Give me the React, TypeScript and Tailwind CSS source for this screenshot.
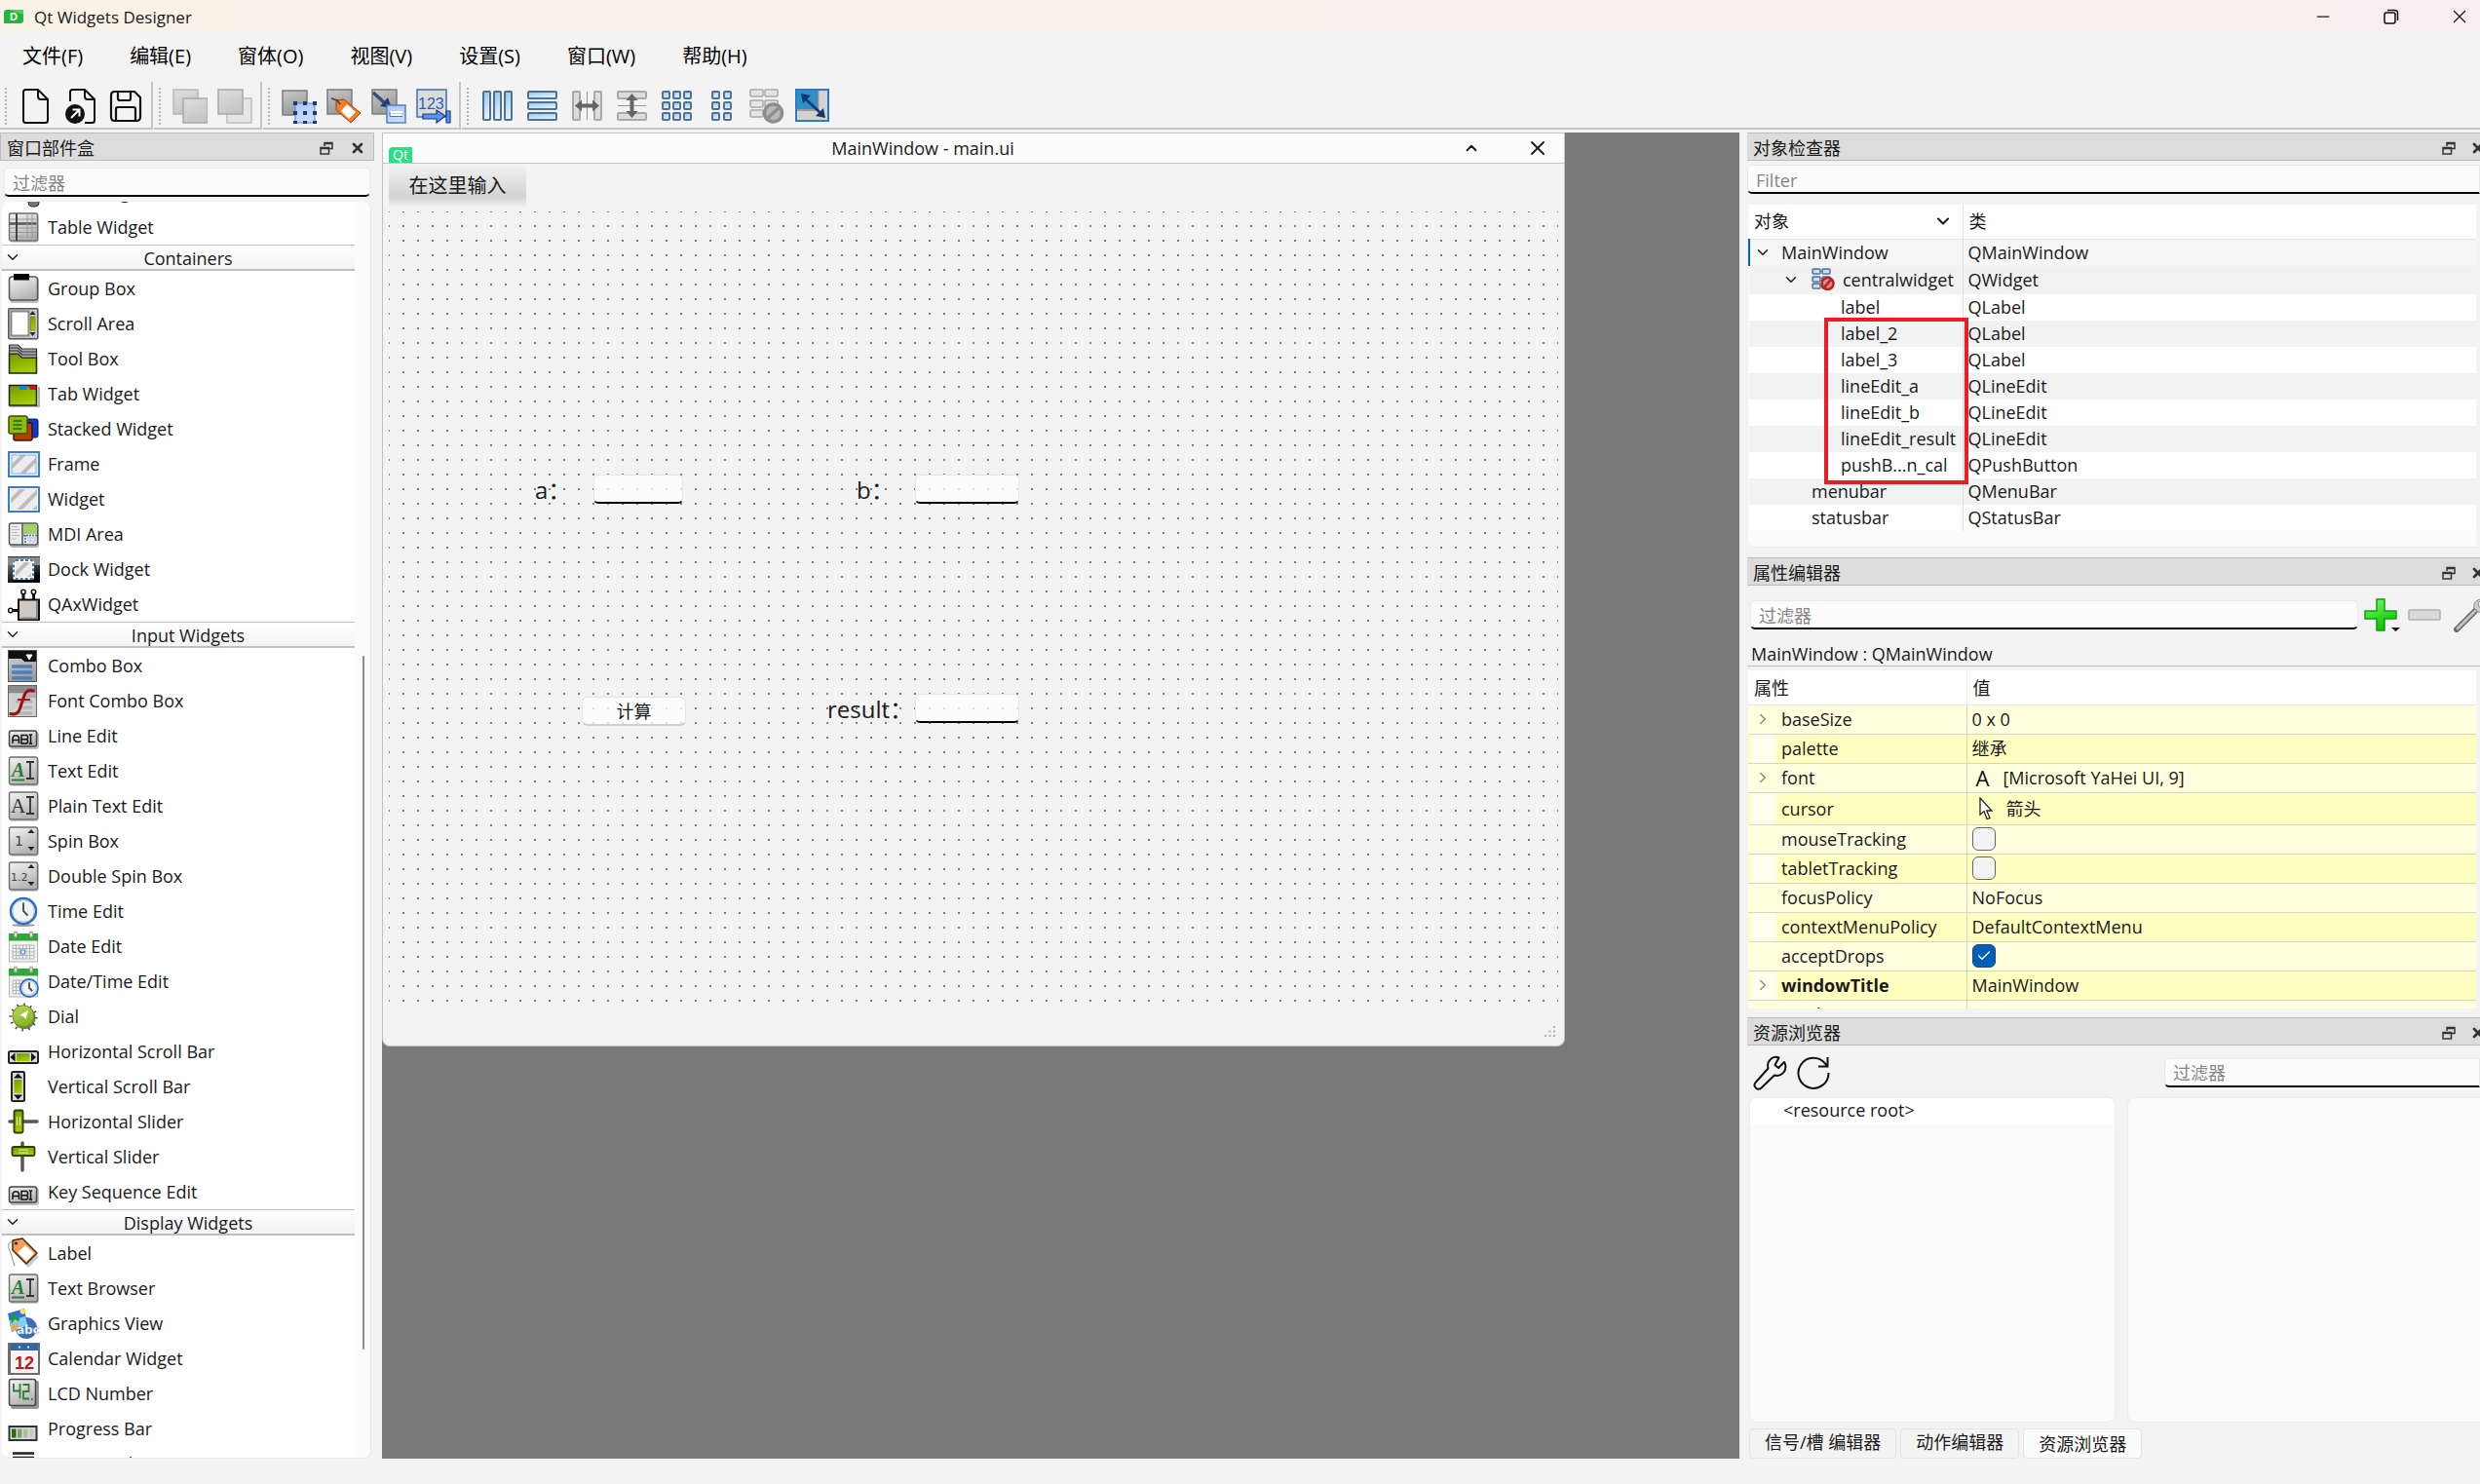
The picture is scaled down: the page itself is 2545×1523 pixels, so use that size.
import type { ReactNode } from 'react';
import { Check, ChevronDown, ChevronRight, ChevronUp, Minus, X } from 'lucide-react';

const FONT = "font-['Open_Sans','Noto_Sans_CJK_SC',sans-serif]";

/* ---------- shared gradients ---------- */

function Gradients() {
  const stops: [string, string, string][] = [
    ['gGray', '#f4f4f4', '#b4b4b4'],
    ['gDark', '#c9c9c9', '#9a9a9a'],
    ['gPale', '#dedede', '#c6c6c6'],
    ['gGreen', '#6f9a00', '#a5cc00'],
    ['gLeaf', '#b6dc5a', '#86b51f'],
    ['gBlue', '#8cc4f2', '#e2f2ff'],
    ['gSoft', '#a9c8ff', '#c9dcff'],
    ['gBlack', '#9a9a9a', '#000000'],
    ['gPlus', '#7dff6a', '#08c400'],
  ];
  return (
    <svg className="absolute size-0" aria-hidden="true">
      <defs>
        {stops.map(([id, a, b]) => (
          <linearGradient key={id} id={id} x1="0" y1="0" x2="0.4" y2="1">
            <stop offset="0" stopColor={a} />
            <stop offset="1" stopColor={b} />
          </linearGradient>
        ))}
      </defs>
    </svg>
  );
}

/* ---------- toolbox icons, drawn on a 33 x 33 grid ---------- */

const Plate = ({ h = 29, y = 2 }: { h?: number; y?: number }) => (
  <>
    <rect x="2" y={y + 1} width="30" height={h} rx="3" fill="#000" opacity=".18" />
    <rect x="1.5" y={y} width="29" height={h - 1} rx="2" fill="url(#gGray)" stroke="#6e6e6e" strokeWidth="1.4" />
  </>
);

const Stripes = ({ x, y, w, h }: { x: number; y: number; w: number; h: number }) => (
  <svg x={x} y={y} width={w} height={h} viewBox={`0 0 ${w} ${h}`}>
    <rect width={w} height={h} fill="#ededed" />
    <path d="M-6 18 16-4M4 26 32-2M16 30 40 6" stroke="#bdbdbb" strokeWidth="4" />
  </svg>
);

const AbIcon = (
  <>
    <rect x="2" y="12" width="30" height="18" rx="3" fill="#000" opacity=".25" />
    <rect x="1.5" y="11" width="28" height="16" rx="2" fill="url(#gGray)" stroke="#444" strokeWidth="1.5" />
    <path d="M5 24v-6l1.500-2h3.500l1.500 2v6M5 20.500h6.500M14 15.500v8.500h5.500l1-1v-2l-1-1.200 1-1.200v-2l-1-1.100zM14 19.800h5.500M22 14.500l1.500 1.200 1.500-1.200M22 24.700l1.500-1.200 1.500 1.200M23.500 15.700v8" fill="none" stroke="#111" strokeWidth="1.500" />
  </>
);

const Tick = ({ up = 8, down = 24 }: { up?: number; down?: number }) => (
  <path d={`M20.500 ${up}l3.500-4 3.500 4zM20.500 ${down - 2}l3.500 4 3.500-4z`} fill="#222" />
);

const CalendarBase = (
  <>
    <rect x="1.500" y="4" width="29" height="28" fill="#f2f2f2" stroke="#b5b5b5" />
    <rect x="1" y="3" width="30" height="7.500" fill="#2fa836" />
    <path d="M5 15h22M5 18.500h22M5 22h22M5 25.500h22M5 29h22M5 15v14M8.500 15v14M12 15v14M15.500 15v14M19 15v14M22.500 15v14M27 15v14" stroke="#b4b4b4" strokeWidth="1" />
    <path d="M8 5.500V2.500M24 5.500V2.500" stroke="#9d9d9d" strokeWidth="4" strokeLinecap="round" />
    <path d="M8 5.500V2.500M24 5.500V2.500" stroke="#eee" strokeWidth="1.500" strokeLinecap="round" />
  </>
);

const Clock = ({ cx, cy, r }: { cx: number; cy: number; r: number }) => (
  <>
    <circle cx={cx} cy={cy} r={r} fill="#f1f4f2" stroke="#2f6fc0" strokeWidth={r / 5} />
    <circle cx={cx} cy={cy} r={r - 1.8} fill="none" stroke="#a9c6e6" strokeWidth="1" />
    <path d={`M${cx} ${cy - r * 0.65}V${cy}l${r * 0.35} ${r * 0.35}`} fill="none" stroke="#444" strokeWidth="1.800" />
  </>
);

const TextEditIcon = (
  <>
    <Plate />
    <text x="4" y="22" fontFamily="Liberation Serif" fontStyle="italic" fontWeight="700" fontSize="20" fill="#2a7a32">A</text>
    <path d="M4 25.500h13" stroke="#2a7a32" strokeWidth="1.800" />
    <path d="M19 7h8M19 24h8M23 7v17" stroke="#333" strokeWidth="1.800" />
  </>
);

const icons: Record<string, ReactNode> = {
  tree: (
    <>
      <rect x="21" y="20" width="11" height="11" rx="4" fill="#777" stroke="#333" />
      <path d="M5 5h10v7H5zM9 12v13h12" fill="none" stroke="#555" strokeWidth="2" />
    </>
  ),
  table: (
    <>
      <Plate />
      <path d="M1.500 12.500h28" stroke="#555" strokeWidth="2.500" />
      <path d="M1.500 8h28M1.500 17h28M1.500 21.500h28M1.500 26h28M20 2v28M25 2v28" stroke="#9b9b9b" />
      <path d="M9 2v28" stroke="#444" strokeWidth="2" />
    </>
  ),
  group: (
    <>
      <rect x="2" y="5" width="30" height="26" rx="3" fill="#000" opacity=".25" />
      <rect x="1.500" y="4" width="29" height="24" rx="3" fill="url(#gGray)" stroke="#555" strokeWidth="1.500" />
      <rect x="6" y="1" width="16" height="6.500" fill="#000" />
    </>
  ),
  scroll: (
    <>
      <rect x="0.800" y="0.800" width="30" height="31" rx="1" fill="#c9c9c9" stroke="#555" strokeWidth="1.500" />
      <rect x="3.500" y="3.500" width="18" height="25" fill="#fff" stroke="#8a8a8a" strokeWidth="2" />
      <rect x="23.500" y="9" width="4.500" height="14" fill="url(#gGreen)" stroke="#5e7a00" strokeWidth=".6" />
      <path d="M22.500 7l3-4 3 4zM22.500 25l3 4 3-4z" fill="#222" />
    </>
  ),
  toolbox: (
    <>
      <path d="M1.500 31V11h9l4 4h15v16z" fill="url(#gGreen)" stroke="#222" strokeWidth="1.500" />
      <path d="M1.500 11V2h9l4 4h15v9h-15l-4-4z" fill="#a9a9ab" stroke="#333" strokeWidth="1.200" />
      <path d="M1.500 5h9l4 4h15M1.500 8h9l4 4h15" fill="none" stroke="#333" strokeWidth="1.200" />
    </>
  ),
  tab: (
    <>
      <path d="M2 29h30V9" fill="none" stroke="#000" opacity=".3" strokeWidth="2" />
      <path d="M1.500 7.500h28V28h-28z" fill="url(#gGreen)" stroke="#222" strokeWidth="1.500" />
      <path d="M11 8h9v4h-8z" fill="#1187e0" />
      <path d="M21 8h8v4h-6z" fill="#d80f0f" />
    </>
  ),
  stacked: (
    <>
      <rect x="16" y="6" width="15" height="19" rx="2" fill="#0a3bd0" stroke="#081d60" />
      <rect x="6" y="10" width="19" height="18" rx="2" fill="#b93c00" stroke="#3a1400" strokeWidth="1.500" />
      <rect x="1" y="3" width="19" height="18" rx="2" fill="#93b800" stroke="#3e4e00" strokeWidth="1.500" />
      <path d="M5.500 8h9M5.500 12h9M5.500 16h9" stroke="#0b6a28" strokeWidth="1.500" />
    </>
  ),
  frame: (
    <>
      <rect x="1" y="4" width="31" height="25" fill="#e4effb" stroke="#3f7cc5" strokeWidth="2" />
      <Stripes x={4} y={7} w={25} h={19} />
      <rect x="4" y="7" width="25" height="19" fill="none" stroke="#8ab2de" strokeWidth="1" />
    </>
  ),
  widget: (
    <>
      <rect x="1" y="4" width="31" height="25" fill="#fff" stroke="#3f7cc5" strokeWidth="2" />
      <Stripes x={3} y={6} w={27} h={21} />
    </>
  ),
  mdi: (
    <>
      <rect x="2" y="6" width="30" height="24" rx="3" fill="#000" opacity=".3" />
      <rect x="1.500" y="5" width="29" height="22" rx="2" fill="#ececec" stroke="#555" strokeWidth="1.500" />
      <rect x="16" y="6" width="14" height="10" fill="#a4d166" />
      <path d="M15 5v22" stroke="#555" strokeWidth="1.500" />
      <path d="M4 8.500h6M4 11.500h8M4 14.500h6M4 17.500h8M4 21h5" stroke="#bbb" />
      <path d="M16 17.500h14M18 17v10" stroke="#3a72c8" strokeWidth="1.500" strokeDasharray="2 1" />
      <path d="M20 20h9M20 23h9M23 19v8M27 19v8" stroke="#b9c6de" />
    </>
  ),
  dock: (
    <>
      <rect y="3" width="33" height="27" fill="url(#gBlack)" />
      <rect y="3" width="33" height="9" fill="#8b8b8b" />
      <path d="M0 3.500h33" stroke="#333" />
      <rect x="5" y="6" width="22" height="21" rx="3" fill="#fff" />
      <Stripes x={8} y={9} w={16} h={15} />
      <rect x="6" y="7" width="20" height="19" rx="2" fill="none" stroke="#3d79c6" strokeWidth="2" strokeDasharray="3 2" />
    </>
  ),
  ax: (
    <>
      <path d="M16 4v9M26.500 4v9M4 22.500h8" stroke="#111" strokeWidth="3" />
      <circle cx="16" cy="3.500" r="2.200" fill="#fff" stroke="#111" strokeWidth="1.500" />
      <circle cx="26.500" cy="3.500" r="2.200" fill="#fff" stroke="#111" strokeWidth="1.500" />
      <circle cx="2.800" cy="22.500" r="2.200" fill="#fff" stroke="#111" strokeWidth="1.500" />
      <rect x="11" y="11.500" width="21" height="20.500" fill="#d0c9c3" stroke="#111" strokeWidth="2" />
      <path d="M30 13v17.500H13" fill="none" stroke="#8d8781" strokeWidth="2" />
    </>
  ),
  combo: (
    <>
      <rect width="30" height="33" fill="#a5a5a5" />
      <rect width="30" height="12" fill="#111" />
      <path d="M0 9h14l4 4h12v20H0z" fill="url(#gDark)" />
      <path d="M19 5h6l-3 5z" fill="#fff" stroke="#fff" />
      <path d="M4 17h21M4 23h21M4 29h21" stroke="#4d7fb9" strokeWidth="3.500" />
      <rect x=".5" y=".5" width="29" height="32" fill="none" stroke="#555" />
    </>
  ),
  fontcombo: (
    <>
      <rect width="30" height="33" fill="url(#gDark)" />
      <path d="M1 9h13l4 4h11v19H1z" fill="#cfcfcf" />
      <rect width="30" height="8" fill="#8c8c8c" />
      <path d="M8 17h17M12 23h13M10 29h15" stroke="#b3b3b3" strokeWidth="3" />
      <rect x=".5" y=".5" width="29" height="32" fill="none" stroke="#666" />
      <path d="M26 6c-5-2-8 1-9.500 6l-4 12c-1.500 4.500-4.500 7-9.500 5.500" fill="none" stroke="#9c0d12" strokeWidth="3" strokeLinecap="round" />
      <path d="M10 15h13" stroke="#9c0d12" strokeWidth="1.800" />
    </>
  ),
  line: AbIcon,
  textedit: TextEditIcon,
  plain: (
    <>
      <Plate />
      <text x="3" y="23" fontFamily="Liberation Serif" fontSize="21" fill="#333">A</text>
      <path d="M19 7h8M19 24h8M23 7v17" stroke="#333" strokeWidth="1.800" />
    </>
  ),
  spin: (
    <>
      <Plate />
      <text x="7" y="21" fontFamily="DejaVu Sans Mono" fontSize="14" fill="#444">1</text>
      <Tick />
    </>
  ),
  dspin: (
    <>
      <Plate />
      <text x="3" y="21" fontFamily="DejaVu Sans" fontSize="11" fill="#444">1.2</text>
      <Tick />
    </>
  ),
  time: (
    <>
      <ellipse cx="16" cy="30.500" rx="12" ry="1.500" fill="#999" />
      <Clock cx={16} cy={16} r={13} />
    </>
  ),
  date: (
    <>
      {CalendarBase}
      <rect x="13.500" y="20" width="4" height="4" fill="#dce9fb" stroke="#4f8ae0" />
    </>
  ),
  datetime: (
    <>
      {CalendarBase}
      <Clock cx={22} cy={23} r={9} />
    </>
  ),
  dial: (
    <>
      <circle cx="16" cy="17" r="13" fill="none" stroke="#444" strokeWidth="3" strokeDasharray="1.500 5.300" />
      <circle cx="17" cy="17.500" r="11.500" fill="#3c4a1a" opacity=".7" />
      <circle cx="16" cy="15.800" r="11" fill="url(#gLeaf)" stroke="#6d8a20" />
      <path d="M21 10l-2.500 9-2.500-3-4-1z" fill="#fff" />
    </>
  ),
  hscroll: (
    <>
      <rect x="1" y="16" width="30" height="12" rx="1.500" fill="#d8d8d8" stroke="#222" strokeWidth="2" />
      <rect x="9" y="18" width="13.500" height="8" fill="url(#gGreen)" />
      <path d="M7.500 17.500v9l-5-4.500zM24 17.500v9l5-4.500z" fill="#111" />
    </>
  ),
  vscroll: (
    <>
      <rect x="4" y="1" width="13" height="30" rx="1.500" fill="#d8d8d8" stroke="#222" strokeWidth="2" />
      <rect x="6.500" y="9" width="8" height="14" fill="url(#gGreen)" />
      <path d="M6 7.500h9l-4.500-5zM6 24.500h9l-4.500 5z" fill="#111" />
    </>
  ),
  hslider: (
    <>
      <path d="M2 16h28" stroke="#555" strokeWidth="3.500" strokeLinecap="round" />
      <rect x="6.500" y="4.500" width="9" height="23" rx="1.500" fill="url(#gGreen)" stroke="#2f3d00" strokeWidth="1.800" />
      <path d="M9.500 11v9M12.500 11v9" stroke="#e2f0a5" strokeWidth="1.200" />
    </>
  ),
  vslider: (
    <>
      <path d="M15 2v28" stroke="#555" strokeWidth="3.500" strokeLinecap="round" />
      <rect x="4.500" y="6" width="23" height="9" rx="1.500" fill="url(#gGreen)" stroke="#2f3d00" strokeWidth="1.800" />
      <path d="M11 9h10M11 12h10" stroke="#e2f0a5" strokeWidth="1.200" />
    </>
  ),
  label: (
    <>
      <path d="M6 4l9-2 16 16-11 11L5 13z" fill="#000" opacity=".2" transform="translate(1 2)" />
      <path d="M5 3l10-2 15 15-11 11L5 13z" fill="#f3a058" stroke="#4a2a10" strokeWidth="1.500" strokeLinejoin="round" />
      <path d="M18 8l9 8.500-8 8-9-9z" fill="#fff" />
      <path d="M8 7C1 1-1 8 2 14s3 11 5 15" fill="none" stroke="#888" strokeWidth="1" />
      <circle cx="8.500" cy="6" r="1.500" fill="#222" />
    </>
  ),
  graphics: (
    <>
      <circle cx="19" cy="21" r="11" fill="#3b6fb2" />
      <path d="M0 6l17-5 3 17-16 7z" fill="#2d6df0" />
      <path d="M2 13l16-4 2 9-16 7z" fill="#7fd0ff" />
      <path d="M3 8c3-3 6-1 6 2 3 0 4 2 2 4l-4-2-3 5z" fill="#1f9a34" />
      <circle cx="15.500" cy="4" r="2.800" fill="#ffe14a" />
      <path d="M3 18l7-2 2 5-8 4z" fill="#e6a85a" />
      <text x="9" y="27" fontFamily="DejaVu Sans" fontWeight="700" fontSize="12" fill="#fff" stroke="#8ea6c4" strokeWidth=".4">abc</text>
    </>
  ),
  calendar: (
    <>
      <rect width="33" height="33" fill="#6d6d6d" />
      <rect x="3" y="1" width="28" height="30" fill="#f5f5f5" />
      <rect x="3" y="1" width="28" height="7" fill="#3565a8" />
      <path d="M11 4.500h2M20 4.500h2" stroke="#cfe0f5" strokeWidth="2" />
      <text x="7" y="27" fontFamily="Liberation Sans" fontWeight="700" fontSize="18" fill="#c01818">12</text>
    </>
  ),
  lcd: (
    <>
      <rect x="3" y="3" width="29" height="29" rx="2" fill="#000" opacity=".4" />
      <rect x="1.500" y="1.500" width="27" height="27" rx="2" fill="url(#gGray)" stroke="#444" strokeWidth="1.500" />
      <path d="M6 6v7.500h6.500M12.500 6v15M15.500 7h6v7h-5.500v7.500h6M24 22h1.500" fill="none" stroke="#2f7a35" strokeWidth="1.800" />
    </>
  ),
  progress: (
    <>
      <rect x="1.500" y="14" width="28" height="14" fill="#d7dbd2" stroke="#333" strokeWidth="2" />
      <rect x="4" y="16.500" width="4.500" height="9" fill="#2f6b0e" />
      <rect x="10" y="16.500" width="4.500" height="9" fill="#7fa070" />
      <rect x="16" y="16.500" width="4.500" height="9" fill="#adbfa5" />
      <rect x="22" y="16.500" width="4.500" height="9" fill="#c3cdbf" />
    </>
  ),
  hline: <path d="M5 5.500h22M5 10h22" stroke="#222" strokeWidth="2.500" />,
};

/* ---------- toolbox ---------- */

type Item = [string, keyof typeof icons];
const sections: { title?: string; items: Item[] }[] = [
  { items: [['Tree Widget', 'tree'], ['Table Widget', 'table']] },
  {
    title: 'Containers',
    items: [
      ['Group Box', 'group'], ['Scroll Area', 'scroll'], ['Tool Box', 'toolbox'], ['Tab Widget', 'tab'],
      ['Stacked Widget', 'stacked'], ['Frame', 'frame'], ['Widget', 'widget'], ['MDI Area', 'mdi'],
      ['Dock Widget', 'dock'], ['QAxWidget', 'ax'],
    ],
  },
  {
    title: 'Input Widgets',
    items: [
      ['Combo Box', 'combo'], ['Font Combo Box', 'fontcombo'], ['Line Edit', 'line'], ['Text Edit', 'textedit'],
      ['Plain Text Edit', 'plain'], ['Spin Box', 'spin'], ['Double Spin Box', 'dspin'], ['Time Edit', 'time'],
      ['Date Edit', 'date'], ['Date/Time Edit', 'datetime'], ['Dial', 'dial'], ['Horizontal Scroll Bar', 'hscroll'],
      ['Vertical Scroll Bar', 'vscroll'], ['Horizontal Slider', 'hslider'], ['Vertical Slider', 'vslider'],
      ['Key Sequence Edit', 'line'],
    ],
  },
  {
    title: 'Display Widgets',
    items: [
      ['Label', 'label'], ['Text Browser', 'textedit'], ['Graphics View', 'graphics'], ['Calendar Widget', 'calendar'],
      ['LCD Number', 'lcd'], ['Progress Bar', 'progress'], ['Horizontal Line', 'hline'],
    ],
  },
];

function DockTitle({ title, cut = false }: { title: string; cut?: boolean }) {
  return (
    <div className="flex h-[29px] shrink-0 items-center overflow-hidden border-y border-[#bcbcbc] bg-[#dcdcdc] pt-0.5 pl-1.5">
      <h2 className="flex-1">{title}</h2>
      <button type="button" aria-label="浮动" className="flex w-8 justify-center">
        <svg viewBox="0 0 14 14" className="size-[14px]" fill="none" stroke="#333" strokeWidth="1.500">
          <path d="M5 5V1.500h8v6H9.500M5 2.500h8M1 6.500h8.500V13H1zM1 7.500h8.500" />
        </svg>
      </button>
      <button type="button" aria-label="关闭" className={cut ? '-mr-3 flex w-7 justify-center' : 'flex w-8 justify-center'}>
        <X className="size-4 text-[#333]" strokeWidth={4} />
      </button>
    </div>
  );
}

const inputBase =
  'border border-[#e8e8e8] border-b-2 border-b-black bg-[#fcfcfc] px-2 pt-0.5 outline-none placeholder:text-[#868686]';

function Toolbox() {
  return (
    <aside className="flex w-[384px] shrink-0 flex-col">
      <div className="h-[29px] border-x border-[#bcbcbc]"><DockTitle title="窗口部件盒" /></div>
      <input aria-label="过滤器" placeholder="过滤器" className={`${inputBase} mx-1 mt-[7px] h-[30px] shrink-0 rounded-[5px]`} />
      <div className="mt-[5px] mr-[3px] ml-0.5 flex min-h-0 flex-1 overflow-hidden rounded-lg border-r border-b border-[#e9e9e9] bg-[#fbfbfb]">
        <div className="min-w-0 flex-1 overflow-hidden bg-[#fefefe]">
          <div className="-mt-7">
            {sections.map((s, i) => (
              <section key={i}>
                {s.title && (
                  <button type="button" className="flex h-[27px] w-full items-center border-t border-b-2 border-[#bfbfbf] bg-linear-to-b from-white to-[#f3f3f3] pl-0.5">
                    <ChevronDown className="size-[18px] text-[#222]" strokeWidth={2} />
                    <span className="flex-1 pt-px">{s.title}</span>
                  </button>
                )}
                <ul>
                  {s.items.map(([name, icon]) => (
                    <li key={name} className="flex h-9 items-center gap-2 pl-1.5">
                      <svg viewBox="0 0 33 33" className="size-[33px] shrink-0" aria-hidden="true">{icons[icon]}</svg>
                      {name}
                    </li>
                  ))}
                </ul>
              </section>
            ))}
          </div>
        </div>
        <div className="flex w-4 flex-col items-center pt-[466px] pb-[111px] pl-0.5">
          <div className="w-0.5 flex-1 rounded bg-[#8d8d8d]" />
        </div>
      </div>
    </aside>
  );
}

/* ---------- main toolbar ---------- */

const Sq = ({ x, y, s = 24, f = 'url(#gDark)', k = '#7c7c7c' }: { x: number; y: number; s?: number; f?: string; k?: string }) => (
  <rect x={x} y={y} width={s} height={s} fill={f} stroke={k} strokeWidth="1.500" />
);
const Bar = ({ x, y, w, h, gray }: { x: number; y: number; w: number; h: number; gray?: boolean }) => (
  <rect x={x} y={y} width={w} height={h} rx="1" fill={gray ? '#dcdcdc' : 'url(#gBlue)'} stroke={gray ? '#a9a9a9' : '#54708f'} strokeWidth="2" />
);

const tools: [string, ReactNode][][] = [
  [
    ['新建', <path d="M5 3.500Q5 1 7.500 1H20l10 10V32.500Q30 35 27.500 35h-20Q5 35 5 32.500zM20 1v7q0 3 3 3h7" fill="none" stroke="#111" strokeWidth="2" />],
    ['打开', (
      <>
        <path d="M7 13V3.500Q7 1 9.500 1H22l10 10V32.500Q32 35 29.500 35H22M22 1v7q0 3 3 3h7" fill="none" stroke="#111" strokeWidth="2" />
        <circle cx="12" cy="26" r="10" fill="#111" />
        <path d="M8 30l8-8M9.500 21.500H16.500V28.500" fill="none" stroke="#fff" strokeWidth="2" />
      </>
    )],
    ['保存', <path d="M7 3h20l6 6v20q0 4-4 4H7q-4 0-4-4V7q0-4 4-4M10 3v7q0 2 2 2h9q2 0 2-2V3M8 33V21q0-2 2-2h16q2 0 2 2v12" fill="none" stroke="#111" strokeWidth="2.200" />],
  ],
  [
    ['置后', <><Sq x={1} y={1} s={25} f="url(#gPale)" k="#b8b8b8" /><Sq x={11} y={10} s={25} f="url(#gPale)" k="#a8a8a8" /></>],
    ['置前', <><Sq x={10} y={10} s={25} f="#e6e6e6" k="#bdbdbd" /><Sq x={1} y={1} s={25} f="url(#gPale)" k="#a8a8a8" /></>],
  ],
  [
    ['编辑窗口部件', (
      <>
        <Sq x={1} y={2} s={25} />
        <rect x="14" y="15" width="20" height="20" fill="url(#gSoft)" stroke="#5b83c4" />
        <path d="M12 13h4v4h-4zM22 13h4v4h-4zM32 13h4v4h-4zM12 23h4v4h-4zM32 23h4v4h-4zM12 33h4v3h-4zM22 33h4v3h-4zM32 33h4v3h-4zM22 23h4v4h-4z" fill="#1f3a6c" />
      </>
    )],
    ['编辑信号/槽', (
      <>
        <Sq x={1} y={1} s={25} />
        <path d="M10 12l8-1 17 14-10 10-15-13z" fill="#f07c28" stroke="#a04410" />
        <path d="M21 16l9 8-7 7-8-8z" fill="#fff" />
        <path d="M5 10l6 2 3 4" fill="none" stroke="#444" strokeWidth="1.500" />
      </>
    )],
    ['编辑伙伴', (
      <>
        <Sq x={1} y={1} s={25} />
        <path d="M2 4l12 11" stroke="#30507e" strokeWidth="3.500" />
        <path d="M21 20l-12-2 8-9z" fill="#1f3f74" />
        <rect x="16" y="17" width="19" height="18" fill="url(#gSoft)" stroke="#5b7fb8" strokeWidth="1.500" />
        <path d="M19 24h13M20 27h11" stroke="#fff" strokeWidth="2" />
        <path d="M19 23.500v5h13" fill="none" stroke="#55789f" />
      </>
    )],
    ['编辑 Tab 顺序', (
      <>
        <rect x="1" y="1" width="30" height="28" fill="#dcdcdc" stroke="#3e6fb8" strokeWidth="1.500" />
        <text x="2" y="21" fontFamily="Liberation Sans" fontSize="16" fill="#2c5fb0">123</text>
        <path d="M7 26h14v-4l9 6-9 7v-4H7zM31 23h4v12h-4z" fill="#5a95ef" stroke="#173c80" strokeWidth="1.200" />
      </>
    )],
  ],
  [
    ['水平布局', <><Bar x={3} y={3} w={7} h={29} /><Bar x={14} y={3} w={7} h={29} /><Bar x={25} y={3} w={7} h={29} /></>],
    ['垂直布局', <><Bar x={3} y={3} w={29} h={7} /><Bar x={3} y={14} w={29} h={7} /><Bar x={3} y={25} w={29} h={7} /></>],
    ['水平拆分', <><Bar x={3} y={3} w={7} h={29} gray /><Bar x={25} y={3} w={7} h={29} gray /><path d="M17.500 3v29" stroke="#999" /><path d="M5 17.500l7-6v4h11v-4l7 6-7 6v-4H12v4z" fill="#666" /></>],
    ['垂直拆分', <><Bar x={3} y={3} w={29} h={7} gray /><Bar x={3} y={25} w={29} h={7} gray /><path d="M3 17.500h29" stroke="#999" /><path d="M17.500 5l-6 7h4v11h-4l6 7 6-7h-4V12h4z" fill="#666" /></>],
    ['栅格布局', <>{[3, 14, 25].map(y => [3, 14, 25].map(x => <Bar key={`${x}-${y}`} x={x} y={y} w={7} h={7} />))}</>],
    ['表单布局', <>{[3, 14, 25].map(y => [8, 20].map(x => <Bar key={`${x}-${y}`} x={x} y={y} w={7} h={7} />))}</>],
    ['打破布局', (
      <>
        {[1, 12, 22].map(y => [0, 15].map(x => <rect key={`${x}-${y}`} x={x + 1} y={y} width="13" height="7" rx="1" fill="#e4e4e4" stroke="#a9a9a9" strokeWidth="1.500" />))}
        <circle cx="24.500" cy="25" r="9" fill="#b9b9b9" stroke="#8d8d8d" strokeWidth="3.500" />
        <path d="M19 30l11-10" stroke="#8d8d8d" strokeWidth="3.500" />
      </>
    )],
    ['调整大小', (
      <>
        <rect x="2" y="1" width="33" height="32" fill="#d2d2d2" stroke="#2a7cc4" strokeWidth="2" />
        <path d="M3 2h21v19H3z" fill="#2f8fc9" />
        <path d="M24.500 2v20H3" fill="none" stroke="#8b8b8b" strokeWidth="1.500" />
        <path d="M11 10l16 15" stroke="#0d3a66" strokeWidth="2.500" />
        <path d="M7 5l10 2-8 8zM32 30l-10-2 8-8z" fill="#0d3a66" />
      </>
    )],
  ],
];

function Toolbar() {
  return (
    <div role="toolbar" className="flex h-[49px] shrink-0 gap-px">
      {tools.map((group, i) => (
        <div
          key={i}
          className={i === 3 ? 'flex flex-1 items-center border-b-2 border-[#c6c6c6] pt-0.5 pl-[5px]' : 'flex items-center border-r-2 border-b-2 border-[#c6c6c6] pt-0.5 pr-0.5 pl-[5px]'}
        >
          <div className="mr-[7px] h-[38px] w-0.5 bg-[repeating-linear-gradient(to_bottom,#b5b5b5_0_2px,transparent_2px_4px)]" />
          {group.map(([name, art]) => (
            <button key={name} type="button" aria-label={name} className="flex w-[46px] justify-center">
              <svg viewBox="0 0 36 36" className="size-9" aria-hidden="true">{art}</svg>
            </button>
          ))}
          {i < 3 && <div className="w-px" />}
        </div>
      ))}
    </div>
  );
}

/* ---------- form being designed ---------- */

const formEdit = 'absolute h-[30px] rounded-[5px] border border-[#e6e6e6] border-b-2 border-b-black bg-white/75 outline-none';
const formLabel = 'absolute h-[30px] text-[24px] leading-[32px] whitespace-nowrap';

function FormWindow() {
  return (
    <div className="flex h-[938px] w-[1214px] flex-col overflow-hidden rounded-b-lg border-x border-b border-[#c0c0c0] bg-[#f3f3f3]">
      <div className="relative flex h-8 shrink-0 items-center border-y border-[#c4c4c4] bg-[#fcfcfc]">
        <span className="absolute bottom-0 left-1.5 h-4 w-6 rounded-tl bg-[#2cde85] text-center text-[14px] leading-4 text-white">Qt</span>
        <span className="flex-1 text-center">MainWindow - main.ui</span>
        <button type="button" aria-label="收起" className="mr-8"><ChevronUp className="size-[18px]" strokeWidth={2.5} /></button>
        <button type="button" aria-label="关闭窗体" className="flex w-[54px] justify-center"><X className="size-6" strokeWidth={1.8} /></button>
      </div>
      <div className="mx-1.5 flex h-[49px] shrink-0">
        <button type="button" className="h-[45px] w-[141px] bg-linear-to-b from-[#f3f3f3] via-[#d3d3d3] via-75% to-[#f3f3f3] text-[20px]">在这里输入</button>
      </div>
      <div className="relative mx-1.5 flex-1 bg-[conic-gradient(from_270deg_at_2px_2px,#7c7c7c_90deg,transparent_0)] bg-size-[15px_15px] bg-position-[-1px_-1px]">
        <label htmlFor="edit-a" className={`${formLabel} top-[270px] left-[150px]`}>a：</label>
        <input id="edit-a" className={`${formEdit} top-[270px] left-[210px] w-[92px]`} />
        <label htmlFor="edit-b" className={`${formLabel} top-[270px] left-[480px]`}>b：</label>
        <input id="edit-b" className={`${formEdit} top-[270px] left-[540px] w-[107px]`} />
        <button type="button" className="absolute top-[498px] left-[198px] h-[30px] w-[107px] rounded-[6px] border border-b-2 border-[#e4e4e4] border-b-[#cfcfcf] bg-white/75">计算</button>
        <label htmlFor="edit-result" className={`${formLabel} top-[495px] left-[450px]`}>result：</label>
        <input id="edit-result" className={`${formEdit} top-[495px] left-[540px] w-[107px]`} />
      </div>
      <div className="flex h-[41px] shrink-0 items-end justify-end p-2">
        <svg viewBox="0 0 12 12" className="size-3" fill="#b0b0b0" aria-hidden="true">
          <path d="M9 0h2v2H9zM9 4.500h2v2H9zM9 9h2v2H9zM4.500 4.500h2v2h-2zM4.500 9h2v2h-2zM0 9h2v2H0z" />
        </svg>
      </div>
    </div>
  );
}

/* ---------- right docks ---------- */

const LayoutIcon = (
  <svg viewBox="0 0 24 24" className="size-6 shrink-0" aria-hidden="true">
    {[1, 9, 16].map(y => [1, 11].map(x => <rect key={`${x}-${y}`} x={x} y={y} width="8" height="5" rx="1" fill="url(#gBlue)" stroke="#54708f" strokeWidth="1.500" />))}
    <circle cx="16.500" cy="16" r="6" fill="#d98a86" stroke="#b5241f" strokeWidth="2.500" />
    <path d="M13 20l7-8" stroke="#b5241f" strokeWidth="2.500" />
  </svg>
);

const objects: { name: string; cls: string; pad: string; open?: boolean; icon?: boolean; h: string }[] = [
  { name: 'MainWindow', cls: 'QMainWindow', pad: 'pl-1', open: true, h: 'h-[27px]' },
  { name: 'centralwidget', cls: 'QWidget', pad: 'pl-[34px]', open: true, icon: true, h: 'h-[29px]' },
  { name: 'label', cls: 'QLabel', pad: 'pl-[94px]', h: 'h-[27px]' },
  { name: 'label_2', cls: 'QLabel', pad: 'pl-[94px]', h: 'h-[27px]' },
  { name: 'label_3', cls: 'QLabel', pad: 'pl-[94px]', h: 'h-[27px]' },
  { name: 'lineEdit_a', cls: 'QLineEdit', pad: 'pl-[94px]', h: 'h-[27px]' },
  { name: 'lineEdit_b', cls: 'QLineEdit', pad: 'pl-[94px]', h: 'h-[27px]' },
  { name: 'lineEdit_result', cls: 'QLineEdit', pad: 'pl-[94px]', h: 'h-[27px]' },
  { name: 'pushB...n_cal', cls: 'QPushButton', pad: 'pl-[94px]', h: 'h-[27px]' },
  { name: 'menubar', cls: 'QMenuBar', pad: 'pl-16', h: 'h-[27px]' },
  { name: 'statusbar', cls: 'QStatusBar', pad: 'pl-16', h: 'h-[27px]' },
];

function ObjectInspector() {
  return (
    <section className="shrink-0">
      <DockTitle title="对象检查器" cut />
      <input aria-label="Filter" placeholder="Filter" className={`${inputBase} mt-1 h-[30px] w-full rounded-l-[5px]`} />
      <div className="relative mt-[11px] mr-1 ml-px h-[352px] rounded-l-lg border-b border-[#e9e9e9] bg-[#fbfbfb]">
        <table className="w-full table-fixed border-collapse text-left">
          <thead>
            <tr className="h-[35px] border-b border-[#e6e6e6] bg-[#fefefe]">
              <th className="w-[219px] border-r border-[#e2e2e2] p-0 pl-[5px] font-normal">
                <span className="flex items-center justify-between pr-[10px]">对象<ChevronDown className="size-5" strokeWidth={2.5} /></span>
              </th>
              <th className="p-0 pl-1.5 font-normal">类</th>
            </tr>
          </thead>
          <tbody>
            {objects.map((o, i) => (
              <tr key={o.name} className={i === 0 ? 'bg-[#f6f6f6]' : i % 2 ? 'bg-[#f2f2f2]' : 'bg-[#fefefe]'}>
                <td className={i === 0 ? 'border-r border-l-2 border-r-[#dedede] border-l-[#005fb8] p-0' : 'border-r border-[#dedede] p-0'}>
                  <div className={`${o.h} ${o.pad} flex items-center`}>
                    {o.open && <ChevronDown className={o.icon ? 'mr-3 size-[18px] shrink-0' : 'mr-[10px] size-[18px] shrink-0'} strokeWidth={2} />}
                    {o.icon && <span className="mr-2">{LayoutIcon}</span>}
                    {o.name}
                  </div>
                </td>
                <td className="p-0 pl-[5px]">{o.cls}</td>
              </tr>
            ))}
          </tbody>
        </table>
        <div className="absolute top-[116px] left-[78px] h-[171px] w-[148px] border-4 border-[#ed1c24]" />
      </div>
    </section>
  );
}

function AIcon() {
  return <span className="mr-[14px] ml-1 text-[22px] text-[#111]" aria-hidden="true">A</span>;
}
function CursorIcon() {
  return (
    <svg viewBox="0 0 14 24" className="mr-[14px] ml-[7px] h-6 w-[14px]" fill="#fff" stroke="#222" strokeWidth="1.300" aria-hidden="true">
      <path d="M1 1v17l4-3.500 3 8 3-1-3.200-7.500H13z" />
    </svg>
  );
}

const properties: { name: string; value?: string; expand?: boolean; icon?: ReactNode; check?: boolean; bold?: boolean; tall?: boolean }[] = [
  { name: 'baseSize', value: '0 x 0', expand: true },
  { name: 'palette', value: '继承' },
  { name: 'font', value: '[Microsoft YaHei UI, 9]', expand: true, icon: <AIcon /> },
  { name: 'cursor', value: '箭头', icon: <CursorIcon />, tall: true },
  { name: 'mouseTracking', check: false },
  { name: 'tabletTracking', check: false },
  { name: 'focusPolicy', value: 'NoFocus' },
  { name: 'contextMenuPolicy', value: 'DefaultContextMenu' },
  { name: 'acceptDrops', check: true },
  { name: 'windowTitle', value: 'MainWindow', expand: true, bold: true },
  { name: 'windowIcon' },
];

function PropertyEditor() {
  return (
    <section className="mt-[10px] shrink-0">
      <DockTitle title="属性编辑器" cut />
      <div className="flex h-[60px] items-center overflow-hidden pl-[3px]">
        <input aria-label="过滤器" placeholder="过滤器" className={`${inputBase} h-[30px] min-w-0 flex-1 rounded-[5px]`} />
        <button type="button" aria-label="添加动态属性" className="ml-1.5 w-[40px]">
          <svg viewBox="0 0 40 36" className="h-9 w-[40px]">
            <path d="M13 2h8v12h12v8H21v12h-8V22H1v-8h12z" fill="url(#gPlus)" stroke="#11a010" strokeWidth="1.500" />
            <path d="M28 31h9l-4.500 4z" fill="#111" />
          </svg>
        </button>
        <button type="button" aria-label="删除动态属性" className="ml-[5px]">
          <svg viewBox="0 0 34 36" className="h-9 w-[34px]"><rect x="1" y="13" width="32" height="10" rx="1" fill="#d9d9d9" stroke="#b0b0b0" strokeWidth="1.500" /></svg>
        </button>
        <button type="button" aria-label="配置" className="-mr-2 ml-3">
          <svg viewBox="0 0 36 36" className="size-9">
            <path d="M4 33l19-19" stroke="#666" strokeWidth="6" strokeLinecap="round" />
            <path d="M5 32l18-18" stroke="#c4c4c4" strokeWidth="3" strokeLinecap="round" />
            <path d="M30 2c-6 0-9 4-8 9l4 4c5 1 9-2 9-8l-4 4-4-1-1-4z" fill="#cfcfcf" stroke="#888" />
          </svg>
        </button>
      </div>
      <div className="flex h-[23px] items-center border-b border-[#bdbdbd] pb-0.5 pl-1">MainWindow : QMainWindow</div>
      <div className="mt-1 mr-1 ml-px h-[347px] overflow-hidden">
        <table className="w-full table-fixed border-collapse text-left">
          <thead>
            <tr className="h-[35px] border-b border-[#e6e6e6] bg-[#fefefe]">
              <th className="w-[224px] border-r border-[#ececec] p-0 pt-0.5 pl-1.5 font-normal">属性</th>
              <th className="p-0 pt-0.5 pl-1.5 font-normal">值</th>
            </tr>
          </thead>
          <tbody>
            {properties.map((p, i) => (
              <tr key={p.name} className={i % 2 ? 'border-b border-[#d4d4c8] bg-[#ffffbf]' : 'border-b border-[#d4d4c8] bg-[#ffffde]'}>
                <td className="border-r border-[#d4d4c8] p-0">
                  <div className={p.tall ? 'flex h-8 items-stretch' : 'flex h-[29px] items-stretch'}>
                    <span className={i % 2 ? 'ml-[3px] flex w-[26px] items-center justify-center bg-[#ffffee]' : 'ml-[3px] flex w-[26px] items-center justify-center'}>
                      {p.expand && <ChevronRight className="-ml-0.5 size-[18px] text-[#888]" strokeWidth={2} />}
                    </span>
                    <span className={p.bold ? 'self-center pl-[5px] font-bold' : 'self-center pl-[5px]'}>{p.name}</span>
                  </div>
                </td>
                <td className="p-0 pl-[5px]">
                  <div className="flex items-center leading-[26px]">
                    {p.icon}
                    {p.check !== undefined ? (
                      <span className="relative flex">
                        <input type="checkbox" defaultChecked={p.check} aria-label={p.name} className="size-6 appearance-none rounded-[6px] border border-[#666] bg-[#f3f3f3] checked:border-[#1c4a7c] checked:bg-[#005fb8]" />
                        {p.check && <Check className="pointer-events-none absolute top-1 left-1 size-4 text-white" strokeWidth={2} />}
                      </span>
                    ) : p.value}
                  </div>
                </td>
              </tr>
            ))}
          </tbody>
        </table>
      </div>
    </section>
  );
}

function ResourceBrowser() {
  const pane = 'rounded-lg border border-[#ececec] bg-[#fbfbfb]';
  const tab = 'rounded border border-[#e3e3e3] px-[15px]';
  return (
    <section className="mt-[9px] flex min-h-0 flex-1 flex-col">
      <DockTitle title="资源浏览器" cut />
      <div className="flex h-[53px] shrink-0 items-center pt-0.5 pl-1.5">
        <button type="button" aria-label="编辑资源">
          <svg viewBox="0 0 36 36" className="size-9" fill="none" stroke="#111" strokeWidth="2" strokeLinejoin="round">
            <path d="M26.500 2.500C20 0 13.500 6 15.500 13.500L2.500 28c-3 4 2 9 6 5.500L22 20.500c7 2 13-4.500 11-11.500q-.5-2-1-2L26 13l-3.500-3z" />
          </svg>
        </button>
        <button type="button" aria-label="重新加载" className="ml-2">
          <svg viewBox="0 0 36 36" className="size-9" fill="none" stroke="#111" strokeWidth="2">
            <path d="M33.500 18A15.500 15.500 0 1 1 30 8.500L32 11M32.500 2v9.500H23" />
          </svg>
        </button>
        <input aria-label="过滤器" placeholder="过滤器" className={`${inputBase} ml-auto h-[30px] w-[324px] rounded-l-[5px]`} />
      </div>
      <div className="flex min-h-0 flex-1 gap-3 pl-0.5">
        <div className={`${pane} w-[376px] overflow-hidden`}>
          <div className="h-[27px] bg-white pl-[34px] leading-6">&lt;resource root&gt;</div>
        </div>
        <div className={`${pane} flex-1 rounded-r-none border-r-0`} />
      </div>
      <div role="tablist" className="mt-1.5 flex h-[31px] shrink-0 gap-1 pl-0.5">
        <button type="button" role="tab" className={`${tab} pb-1`}>信号/槽 编辑器</button>
        <button type="button" role="tab" className={`${tab} pb-1`}>动作编辑器</button>
        <button type="button" role="tab" aria-selected="true" className={`${tab} bg-[#fcfcfc]`}>资源浏览器</button>
      </div>
    </section>
  );
}

/* ---------- application ---------- */

const menus = ['文件(F)', '编辑(E)', '窗体(O)', '视图(V)', '设置(S)', '窗口(W)', '帮助(H)'];

export default function App() {
  return (
    <div className={`${FONT} flex h-screen flex-col overflow-hidden bg-[#f3f3f3] text-[18px] leading-6 text-[#1a1a1a]`}>
      <Gradients />
      <header className="flex h-[33px] shrink-0 items-center bg-linear-to-r from-[#f9f2e7] via-[#faf0ea] to-[#faeef2] pl-1">
        <svg viewBox="0 0 20 14" className="h-[14px] w-5" aria-hidden="true">
          <path d="M2 0h18v12l-2 2H0V2z" fill="#25b53a" />
          <path d="M2 0h18v5L6 0z" fill="#4ad45c" />
          <text x="6" y="11" fontFamily="Liberation Sans" fontWeight="700" fontSize="11" fill="#fff">D</text>
        </svg>
        <h1 className="ml-[11px] flex-1 pt-0.5 text-[17px]">Qt Widgets Designer</h1>
        <button type="button" aria-label="最小化" className="flex w-[70px] justify-center"><Minus className="size-5" strokeWidth={1.5} /></button>
        <button type="button" aria-label="还原" className="flex w-[70px] justify-center">
          <svg viewBox="0 0 16 16" className="size-4" fill="none" stroke="#111" strokeWidth="1.500">
            <rect x="1" y="4" width="11" height="11" rx="2" />
            <path d="M4 1.500h7.500q3 0 3 3V12" />
          </svg>
        </button>
        <button type="button" aria-label="关闭" className="-mr-[14px] flex w-[70px] justify-center"><X className="size-[22px]" strokeWidth={1.5} /></button>
      </header>
      <nav className="flex h-[51px] shrink-0 items-center gap-12 pb-0.5 pl-[23px] text-[20px] text-black">
        {menus.map(m => <button key={m} type="button">{m}</button>)}
      </nav>
      <Toolbar />
      <main className="flex min-h-0 flex-1 pt-[3px]">
        <Toolbox />
        <div className="mx-2 min-w-0 flex-1 overflow-hidden bg-[#797979]"><FormWindow /></div>
        <div className="flex w-[752px] shrink-0 flex-col overflow-hidden"><ObjectInspector /><PropertyEditor /><ResourceBrowser /></div>
      </main>
      <footer className="h-[26px] shrink-0" />
    </div>
  );
}
